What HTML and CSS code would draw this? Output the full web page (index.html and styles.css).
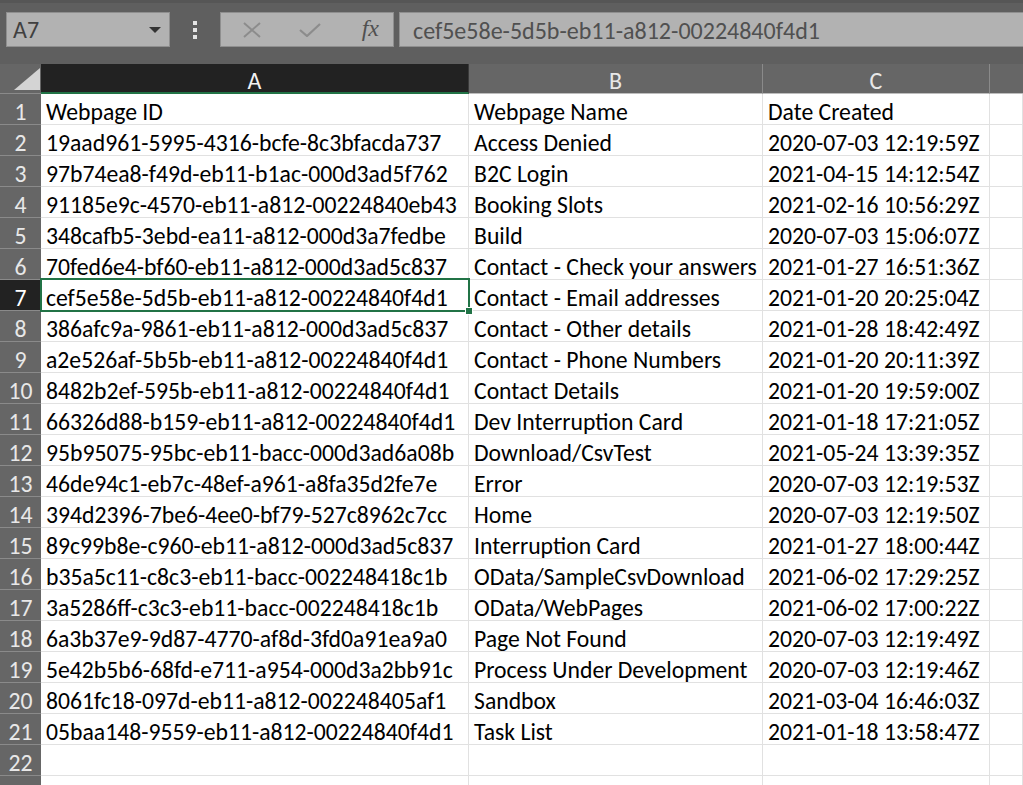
FILE: index.html
```html
<!DOCTYPE html>
<html>
<head>
<meta charset="utf-8">
<link rel="stylesheet" href="styles.css">
</head>
<body>
<div class="app">
  <div class="toolbar">
    <div class="namebox">
      <span class="name">A7</span>
      <span class="caret"></span>
    </div>
    <div class="dots"><i></i><i></i><i></i></div>
    <div class="fxbox">
      <svg class="ico" width="22" height="16" viewBox="0 0 22 16"><path d="M3 1 L19 15 M19 1 L3 15" stroke="#8c8c8c" stroke-width="2" fill="none"/></svg>
      <svg class="ico" width="22" height="14" viewBox="0 0 22 14"><path d="M1 7 L8 13 L21 1" stroke="#8c8c8c" stroke-width="2.2" fill="none"/></svg>
      <span class="fx">fx</span>
    </div>
    <div class="formula">cef5e58e-5d5b-eb11-a812-00224840f4d1</div>
  </div>
  <div class="sheet" id="sheet">
    <div class="corner"><span class="tri"></span></div>
    <div class="colhead sel">A</div>
    <div class="colhead">B</div>
    <div class="colhead">C</div>
    <div class="colhead last"></div>
  </div>
</div>
<script src="app.js"></script>
</body>
</html>
```
FILE: app.js
```js
const rows = [
["Webpage ID","Webpage Name","Date Created"],
["19aad961-5995-4316-bcfe-8c3bfacda737","Access Denied","2020-07-03 12:19:59Z"],
["97b74ea8-f49d-eb11-b1ac-000d3ad5f762","B2C Login","2021-04-15 14:12:54Z"],
["91185e9c-4570-eb11-a812-00224840eb43","Booking Slots","2021-02-16 10:56:29Z"],
["348cafb5-3ebd-ea11-a812-000d3a7fedbe","Build","2020-07-03 15:06:07Z"],
["70fed6e4-bf60-eb11-a812-000d3ad5c837","Contact - Check your answers","2021-01-27 16:51:36Z"],
["cef5e58e-5d5b-eb11-a812-00224840f4d1","Contact - Email addresses","2021-01-20 20:25:04Z"],
["386afc9a-9861-eb11-a812-000d3ad5c837","Contact - Other details","2021-01-28 18:42:49Z"],
["a2e526af-5b5b-eb11-a812-00224840f4d1","Contact - Phone Numbers","2021-01-20 20:11:39Z"],
["8482b2ef-595b-eb11-a812-00224840f4d1","Contact Details","2021-01-20 19:59:00Z"],
["66326d88-b159-eb11-a812-00224840f4d1","Dev Interruption Card","2021-01-18 17:21:05Z"],
["95b95075-95bc-eb11-bacc-000d3ad6a08b","Download/CsvTest","2021-05-24 13:39:35Z"],
["46de94c1-eb7c-48ef-a961-a8fa35d2fe7e","Error","2020-07-03 12:19:53Z"],
["394d2396-7be6-4ee0-bf79-527c8962c7cc","Home","2020-07-03 12:19:50Z"],
["89c99b8e-c960-eb11-a812-000d3ad5c837","Interruption Card","2021-01-27 18:00:44Z"],
["b35a5c11-c8c3-eb11-bacc-002248418c1b","OData/SampleCsvDownload","2021-06-02 17:29:25Z"],
["3a5286ff-c3c3-eb11-bacc-002248418c1b","OData/WebPages","2021-06-02 17:00:22Z"],
["6a3b37e9-9d87-4770-af8d-3fd0a91ea9a0","Page Not Found","2020-07-03 12:19:49Z"],
["5e42b5b6-68fd-e711-a954-000d3a2bb91c","Process Under Development","2020-07-03 12:19:46Z"],
["8061fc18-097d-eb11-a812-002248405af1","Sandbox","2021-03-04 16:46:03Z"],
["05baa148-9559-eb11-a812-00224840f4d1","Task List","2021-01-18 13:58:47Z"],
["","",""],
["","",""]
];
const sheet = document.getElementById('sheet');
rows.forEach((r, i) => {
  const n = i + 1;
  const h = document.createElement('div');
  h.className = 'rowhead' + (n === 7 ? ' sel' : '');
  h.textContent = n;
  sheet.appendChild(h);
  r.forEach((v, j) => {
    const c = document.createElement('div');
    c.className = 'cell';
    c.textContent = v;
    if (n === 7 && j === 0) {
      c.classList.add('active');
      const f = document.createElement('span');
      f.className = 'focus';
      const hd = document.createElement('span');
      hd.className = 'handle';
      f.appendChild(hd);
      c.appendChild(f);
    }
    sheet.appendChild(c);
  });
  const e = document.createElement('div');
  e.className = 'cell';
  sheet.appendChild(e);
});
```
FILE: styles.css
```css
html, body {
  margin: 0;
  padding: 0;
  background: #ffffff;
  overflow: hidden;
}
.app {
  width: 1023px;
  height: 785px;
  overflow: hidden;
  font-family: Carlito, Calibri, "Open Sans", sans-serif;
}
.toolbar {
  height: 64px;
  box-sizing: border-box;
  background: #5f5f5f;
  border-top: 3px solid #565656;
  padding: 9px 0 0 6px;
  display: flex;
  align-items: flex-start;
}
.namebox {
  width: 164px;
  height: 35px;
  box-sizing: border-box;
  background: #b2b2b2;
  border: 1px solid #8f8f8f;
  display: flex;
  align-items: center;
  justify-content: space-between;
  padding: 0 8px 0 6px;
}
.name {
  font-size: 24px;
  line-height: 24px;
  color: #404040;
  padding-top: 1px;
}
.caret {
  width: 0;
  height: 0;
  border-left: 6px solid transparent;
  border-right: 6px solid transparent;
  border-top: 6px solid #333;
}
.dots {
  width: 50px;
  height: 35px;
  display: flex;
  flex-direction: column;
  align-items: center;
  justify-content: center;
  gap: 3px;
}
.dots i {
  display: block;
  width: 4px;
  height: 4px;
  background: #e4e4e4;
}
.fxbox {
  width: 174px;
  height: 35px;
  box-sizing: border-box;
  background: #b2b2b2;
  border: 1px solid #8f8f8f;
  display: flex;
  align-items: center;
  padding: 0 14px 0 20px;
  gap: 36px;
}
.fx {
  font-family: "Liberation Serif", serif;
  font-style: italic;
  font-size: 24px;
  color: #505050;
  margin-left: auto;
  padding-bottom: 2px;
}
.formula {
  flex: 1;
  margin-left: 5px;
  height: 35px;
  box-sizing: border-box;
  background: #b2b2b2;
  border: 1px solid #8f8f8f;
  border-right: none;
  padding: 6px 0 0 13px;
  font-size: 24px;
  line-height: 24px;
  color: #505050;
  white-space: nowrap;
}
.sheet {
  display: grid;
  grid-template-columns: 41px 428px 294px 227px 33px;
  grid-template-rows: 30px;
  grid-auto-rows: 31px;
}
.corner {
  background: #666666;
  position: relative;
  border-bottom: 1px solid #8a8a8a;
}
.tri {
  position: absolute;
  right: 1px;
  bottom: 3px;
  width: 0;
  height: 0;
  border-left: 26px solid transparent;
  border-bottom: 22px solid #d4d4d4;
}
.colhead {
  background: #666666;
  color: #e8e8e8;
  font-size: 24px;
  text-align: center;
  line-height: 24px;
  box-sizing: border-box;
  border-right: 1px solid #8a8a8a;
  border-bottom: 1px solid #bdbdbd;
  padding-top: 5px;
}
.colhead.sel {
  background: #222222;
  color: #f2f2f2;
  border-bottom: 2px solid #217346;
  border-right: 1px solid #3a3a3a;
}
.colhead.last {
  border-right: none;
}
.rowhead {
  background: #666666;
  color: #e8e8e8;
  font-size: 23.7px;
  text-align: center;
  box-sizing: border-box;
  border-bottom: 1px solid #8a8a8a;
  line-height: 24px;
  padding-top: 6px;
  overflow: hidden;
}
.rowhead.sel {
  background: #222222;
  color: #ffffff;
}
.cell {
  box-sizing: border-box;
  border-right: 1px solid #e1e1e1;
  border-bottom: 1px solid #e1e1e1;
  font-size: 23.7px;
  color: #000000;
  line-height: 24px;
  padding: 6px 0 0 5px;
  white-space: nowrap;
  overflow: hidden;
}
.cell.active {
  position: relative;
  overflow: visible;
}
.focus {
  position: absolute;
  left: -1px;
  top: -2px;
  right: -2px;
  bottom: -2px;
  border: 2px solid #217346;
  z-index: 2;
}
.handle {
  position: absolute;
  right: -5px;
  bottom: -5px;
  width: 6px;
  height: 6px;
  background: #217346;
  border: 1px solid #ffffff;
}
```
